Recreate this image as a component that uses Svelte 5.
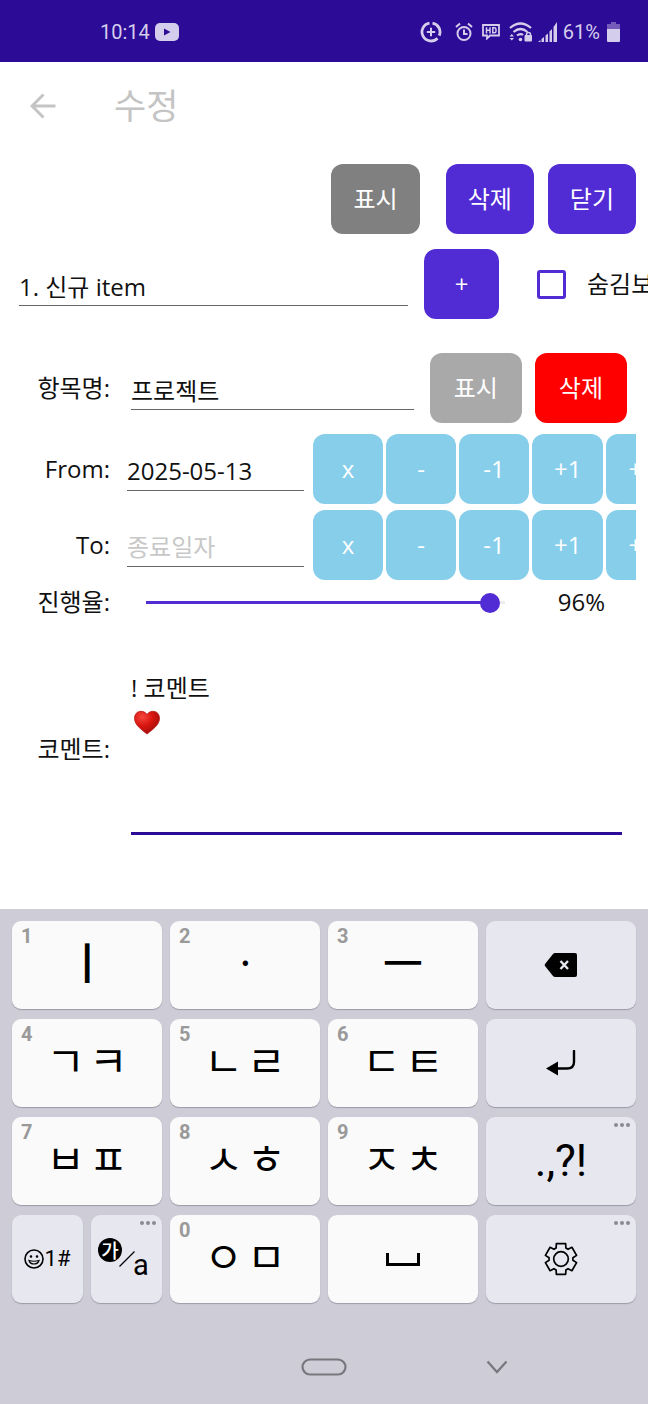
<script>
  let title = $state('1. 신규 item');
  let name = $state('프로젝트');
  let from = $state('2025-05-13');
  let to = $state('');
  let progress = $state(96);
  let comment = $state('! 코멘트\n');
  let showHidden = $state(false);

  const steps = ['x', '-', '-1', '+1', '+7'];
  const rows = [
    [
      { n: '1', t: 'ㅣ', kind: 'vowel' },
      { n: '2', t: 'ㆍ', kind: 'dot' },
      { n: '3', t: 'ㅡ', kind: 'vowel' },
      { icon: 'back', label: '지우기' }
    ],
    [{ n: '4', t: 'ㄱㅋ' }, { n: '5', t: 'ㄴㄹ' }, { n: '6', t: 'ㄷㅌ' }, { icon: 'enter', label: '줄바꿈' }],
    [{ n: '7', t: 'ㅂㅍ' }, { n: '8', t: 'ㅅㅎ' }, { n: '9', t: 'ㅈㅊ' }, { icon: 'punct', label: '문장 부호', more: true }],
    [{ icon: 'split' }, { n: '0', t: 'ㅇㅁ' }, { icon: 'space', label: '스페이스', light: true }, { icon: 'gear', label: '설정', more: true }]
  ];

  // Outline of the six-toothed gear, centred on 0,0
  const gear =
    'M' +
    Array.from({ length: 6 }, (_, i) =>
      [[-24, 12], [-17, 16], [17, 16], [24, 12]]
        .map(([d, r]) => {
          const a = ((i * 60 + d - 90) * Math.PI) / 180;
          return `${(r * Math.cos(a)).toFixed(2)} ${(r * Math.sin(a)).toFixed(2)}`;
        })
        .join('L')
    ).join('L') +
    'Z';
</script>

{#snippet dots()}
  <svg class="more" width="18" height="6" viewBox="0 0 18 6" aria-hidden="true">
    <circle cx="3" cy="3" r="2" /><circle cx="9" cy="3" r="2" /><circle cx="15" cy="3" r="2" />
  </svg>
{/snippet}

{#snippet dateRow(id, label, hint, get, set)}
  <div class="row date">
    <label class="name" for={id}>{label}</label>
    <input {id} class="line" type="text" placeholder={hint} value={get()} oninput={(e) => set(e.currentTarget.value)} />
    <div class="steps">
      {#each steps as s}<button class="btn sky">{s}</button>{/each}
    </div>
  </div>
{/snippet}

<div class="screen">
  <header class="status">
    <div class="side">
      <span>10:14</span>
      <svg width="24" height="18" viewBox="0 0 24 18"><rect width="24" height="18" rx="5" fill="#d5cdec" /><path d="M9 5.500L15.500 9L9 12.500Z" fill="#2c0b96" /></svg>
    </div>
    <div class="side icons">
      <svg class="saver" width="22" height="22" viewBox="0 0 22 22" fill="none" stroke="#d5cdec">
        <path d="M9.500 2.100A9 9 0 1 0 17.500 17.200M19.200 14.700A9 9 0 0 0 12.500 2.100" stroke-width="2.800" />
        <path d="M11 6.800V15.200M6.800 11H15.200" stroke-width="2" />
      </svg>
      <svg class="alarm" width="18" height="20" viewBox="0 0 18 20" fill="none" stroke="#d5cdec" stroke-width="2">
        <circle cx="9" cy="11.500" r="6.500" /><path d="M9 7.500V12H12.500M1 5L5 1.500M17 5L13 1.500" />
      </svg>
      <svg class="hd" width="18" height="16" viewBox="0 0 18 16" fill="none" stroke="#d5cdec">
        <path d="M1 1H17V11.500H8L5 14.500V11.500H1Z" stroke-width="1.800" />
        <path d="M4.500 3.200V9.500M8 3.200V9.500M4.500 6.300H8M10.800 3.800V8.800H12.300Q14 8.800 14 7.200V5.400Q14 3.800 12.300 3.800Z" stroke-width="1.500" />
      </svg>
      <svg class="wifi" width="24" height="20" viewBox="0 0 24 20" fill="none" stroke="#d5cdec" stroke-width="2.200">
        <path d="M1 6Q11.500 -3 22 6M4.500 10Q11.500 4 18.500 10M8 13.500Q11.500 10.800 14 13" />
        <path d="M17.500 14V12.500A2 2 0 0 1 21.500 12.500V14" stroke-width="1.500" />
        <g fill="#d5cdec" stroke="none"><rect x="15.500" y="13" width="7.500" height="6.500" rx="1" /><circle cx="11.500" cy="17.500" r="1.800" /><path d="M.5 14.500L2.800 12L5 14.500ZM.5 16L2.800 18.500L5 16Z" /></g>
      </svg>
      <svg class="bars" width="20" height="20" viewBox="0 0 20 20" fill="#d5cdec">
        <path d="M0 20L2.500 18V20ZM3.500 17L6 15V20H3.500ZM7.500 13.500L10 11.500V20H7.500ZM11.500 9.500L14 7V20H11.500ZM15.500 5L19 0V20H15.500Z" />
      </svg>
      <span>61%</span>
      <svg class="battery" width="13" height="20" viewBox="0 0 13 20"><path d="M4 0H9V2H13V7H0V2H4Z" fill="#755bb9" /><path d="M0 7H13V19Q13 20 12 20H1Q0 20 0 19Z" fill="#d5cdec" /></svg>
    </div>
  </header>

  <nav class="appbar">
    <button class="plain" aria-label="뒤로">
      <svg width="26" height="26" viewBox="0 0 26 26" fill="none" stroke="#c4c4c4" stroke-width="3"><path d="M25.500 13H3M13.500 1.500L2 13L13.500 24.500" /></svg>
    </button>
    <h1>수정</h1>
  </nav>

  <main>
    <div class="row actions">
      <button class="btn gray">표시</button>
      <button class="btn">삭제</button>
      <button class="btn">닫기</button>
    </div>

    <div class="row item">
      <input class="line" type="text" aria-label="item" bind:value={title} />
      <button class="btn">+</button>
      <label class="check"><input type="checkbox" bind:checked={showHidden} /><span>숨김보기</span></label>
    </div>

    <div class="row entry">
      <label class="name" for="name">항목명:</label>
      <input id="name" class="line" type="text" bind:value={name} />
      <button class="btn silver">표시</button>
      <button class="btn red">삭제</button>
    </div>

    {@render dateRow('from', 'From:', '시작일자', () => from, (v) => (from = v))}
    {@render dateRow('to', 'To:', '종료일자', () => to, (v) => (to = v))}

    <div class="row progress">
      <label class="name" for="progress">진행율:</label>
      <input id="progress" type="range" min="0" max="100" bind:value={progress} style="--p:{progress / 100}" />
      <output for="progress">{progress}%</output>
    </div>

    <div class="row comment">
      <label class="name" for="comment">코멘트:</label>
      <div class="box">
        <textarea id="comment" bind:value={comment}></textarea>
        <svg class="heart" width="28" height="26" viewBox="0 0 28 26" aria-hidden="true">
          <defs><radialGradient id="h" cx=".32" cy=".25" r=".8"><stop offset="0" stop-color="#f4473f" /><stop offset=".5" stop-color="#d9150f" /><stop offset="1" stop-color="#9c0d0a" /></radialGradient></defs>
          <path d="M14 4.500C17-.5 26.500 0 26.500 8.500C26.500 15 19 20 14 24C9 20 1.500 15 1.500 8.500C1.500 0 11-.5 14 4.500Z" fill="url(#h)" stroke="#b51a15" stroke-width=".8" />
        </svg>
      </div>
    </div>
  </main>

  <section class="keyboard">
    {#each rows as row}
      {#each row as k}
        {#if k.icon === 'split'}
          <div class="pair">
            <button class="key fn symbols">
              <svg width="22" height="22" viewBox="0 0 22 22" fill="none" stroke="#000" stroke-width="1.600"><circle cx="11" cy="11" r="9" /><path d="M6 12.500Q7 16 11 16T16 12.500Q11 14 6 12.500Z" stroke-width="1.200" /><circle cx="8" cy="8.500" r=".7" fill="#000" stroke-width="1.200" /><circle cx="14" cy="8.500" r=".7" fill="#000" stroke-width="1.200" /></svg><span>1#</span>
            </button>
            <button class="key fn lang">
              {@render dots()}
              <span class="ko">가</span>
              <svg class="slash" width="16" height="16" viewBox="0 0 16 16" stroke="#000" stroke-width="1.300"><path d="M.5 15.500L15.500 .5" /></svg>
              <span class="en">a</span>
            </button>
          </div>
        {:else if k.t}
          <button class="key jamo {k.kind}">
            <span class="hint">{k.n}</span>
            {#each k.t as c}<span>{c}</span>{/each}
          </button>
        {:else}
          <button class="key" class:fn={!k.light} aria-label={k.label}>
            {#if k.more}{@render dots()}{/if}
            {#if k.icon === 'back'}
              <svg width="34" height="24" viewBox="0 0 34 24"><path d="M11 0H31Q33 0 33 2V22Q33 24 31 24H11Q10 24 9 23L1 13Q.2 12 1 11L9 1Q10 0 11 0Z" /><path d="M16.500 8L24 16M24 8L16.500 16" stroke="#e7e7f0" stroke-width="2.400" /></svg>
            {:else if k.icon === 'enter'}
              <svg width="30" height="26" viewBox="0 0 30 26"><path d="M28 1V12Q28 18.500 21 18.500H10" fill="none" stroke="#000" stroke-width="2.400" stroke-linecap="round" /><path d="M0 18.500L12 11.500V25.500Z" /></svg>
            {:else if k.icon === 'punct'}
              <span class="punct">.,?!</span>
            {:else if k.icon === 'space'}
              <svg width="34" height="13" viewBox="0 0 34 13" fill="none" stroke="#000" stroke-width="3"><path d="M1.500 0V11.500H32.500V0" /></svg>
            {:else}
              <svg width="34" height="34" viewBox="-17 -17 34 34" fill="none" stroke="#000" stroke-width="1.700" stroke-linejoin="round"><path d={gear} /><circle r="7.300" /></svg>
            {/if}
          </button>
        {/if}
      {/each}
    {/each}
  </section>

  <footer>
    <button class="plain" aria-label="홈"><svg width="46" height="18" viewBox="0 0 46 18" fill="none" stroke="#77777e" stroke-width="2.200"><rect x="1.500" y="1.500" width="43" height="15" rx="7.500" /></svg></button>
    <button class="plain" aria-label="키보드 숨기기"><svg width="22" height="14" viewBox="0 0 22 14" fill="none" stroke="#77777e" stroke-width="2.200"><path d="M1.500 1.500L11 12L20.500 1.500" /></svg></button>
  </footer>
</div>

<style>
  :global(body) {
    margin: 0;
    background: #cdccd7;
  }
  .screen {
    background: #fff;
    color: #111;
    font: 24px/34px 'Open Sans', 'Noto Sans CJK KR', sans-serif;
    overflow: hidden;
  }
  .screen * {
    box-sizing: border-box;
  }
  button,
  input,
  textarea {
    font: inherit;
    color: inherit;
    margin: 0;
    padding: 0;
    border: 0;
    background: none;
    outline: 0;
  }
  svg {
    display: block;
    flex: none;
  }
  .status {
    height: 62px;
    padding: 1px 28px 0 100px;
    display: flex;
    align-items: center;
    justify-content: space-between;
    background: #2c0b96;
    color: #d5cdec;
    font: 20px/24px Roboto, sans-serif;
  }
  .side {
    display: flex;
    align-items: center;
    gap: 5px;
  }
  .saver {
    margin-right: 8px;
  }
  .alarm,
  .hd {
    margin-right: 4px;
  }
  .battery {
    margin-left: 2px;
  }
  .appbar {
    height: 88px;
    padding-left: 30px;
    display: flex;
    align-items: center;
    gap: 58px;
  }
  .plain {
    display: flex;
  }
  h1 {
    margin: 0;
    color: #c4c4c4;
    font-size: 35px;
    line-height: 48px;
    font-weight: 400;
  }
  main {
    padding-top: 14px;
    display: flex;
    flex-direction: column;
  }
  .row {
    display: flex;
    align-items: center;
  }
  .btn {
    flex: none;
    min-width: 70px;
    height: 70px;
    padding: 0 22px;
    border-radius: 12px;
    background: #512bd4;
    color: #fff;
    white-space: nowrap;
  }
  .gray {
    background: #808080;
  }
  .silver {
    background: #a9a9a9;
  }
  .red {
    background: #f00;
  }
  .sky {
    background: #87ceeb;
  }
  .line {
    min-width: 0;
    height: 44px;
    padding: 4px 0 1px;
    border-bottom: 1px solid #666;
  }
  .line::placeholder {
    color: #c8c8c8;
    opacity: 1;
  }
  .name {
    flex: none;
    width: 110px;
    text-align: right;
  }
  .actions {
    justify-content: flex-end;
    gap: 14px;
    padding-right: 12px;
  }
  .actions .gray {
    margin-right: 12px;
  }
  .item {
    display: grid;
    grid-template-columns: 1fr 75px 133px;
    gap: 16px;
    margin-top: 15px;
    padding-left: 19px;
  }
  .check {
    display: flex;
    align-items: center;
    gap: 21px;
    padding-left: 22px;
    overflow: hidden;
    white-space: nowrap;
  }
  .check input {
    appearance: none;
    flex: none;
    width: 29px;
    height: 29px;
    border: 3px solid #512bd4;
    border-radius: 3px;
  }
  .check input:checked {
    background: #512bd4;
  }
  .entry {
    margin-top: 34px;
    padding-right: 21px;
  }
  .entry .line {
    flex: 1;
    margin: 0 16px 0 21px;
  }
  .entry .btn {
    padding: 0 24px;
  }
  .entry .red {
    margin-left: 13px;
  }
  .date {
    margin-top: 11px;
    padding-right: 12px;
  }
  .date + .date {
    margin-top: 6px;
  }
  .date .line {
    flex: none;
    width: 177px;
    margin: 0 9px 0 17px;
  }
  .steps {
    flex: 1;
    min-width: 0;
    display: flex;
    gap: 3px;
    overflow: hidden;
  }
  .progress {
    margin-top: 5px;
    padding-right: 43px;
  }
  .progress input {
    appearance: none;
    flex: 1;
    min-width: 0;
    height: 20px;
    margin: 0 43px 0 26px;
  }
  .progress input::-webkit-slider-runnable-track {
    height: 3px;
    background: linear-gradient(
      to right,
      transparent 10px,
      #512bd4 10px calc(10px + (100% - 20px) * var(--p)),
      #ececf0 0 calc(100% - 10px),
      transparent 0
    );
  }
  .progress input::-webkit-slider-thumb {
    appearance: none;
    width: 20px;
    height: 20px;
    margin-top: -8px;
    border-radius: 50%;
    background: #512bd4;
  }
  .comment {
    margin-top: 44px;
    padding: 0 26px 74px 0;
  }
  .box {
    position: relative;
    flex: 1;
    margin-left: 21px;
  }
  textarea {
    display: block;
    width: 100%;
    height: 172px;
    padding-top: 8px;
    resize: none;
    border-bottom: 3px solid #2c0b96;
  }
  .heart {
    position: absolute;
    left: 2px;
    top: 47px;
  }
  .keyboard {
    display: grid;
    grid-template-columns: repeat(4, minmax(0, 1fr));
    gap: 10px 8px;
    padding: 12px 12px 50px;
    background: #cdccd7;
  }
  .key {
    position: relative;
    display: flex;
    align-items: center;
    justify-content: center;
    height: 88px;
    min-width: 0;
    border-radius: 9px;
    background: #fafafa;
    box-shadow: 0 1px 1px #9c9ca8;
    color: #000;
    font: 400 42px/48px 'Noto Sans CJK KR', sans-serif;
  }
  .jamo {
    gap: 4px;
    padding-bottom: 8px;
  }
  .vowel {
    font-size: 44px;
    font-weight: 500;
  }
  .fn {
    background: #e7e7f0;
  }
  .hint {
    position: absolute;
    left: 9px;
    top: 3px;
    color: #999;
    font: 700 20px/24px Roboto, sans-serif;
  }
  .more {
    position: absolute;
    right: 5px;
    top: 5px;
    fill: #8a8a92;
  }
  .pair {
    display: grid;
    grid-template-columns: 1fr 1fr;
    gap: 8px;
  }
  .symbols {
    padding-right: 2px;
    font: 22px/26px Roboto, sans-serif;
  }
  .lang {
    padding-right: 6px;
  }
  .lang .ko {
    width: 24px;
    height: 24px;
    margin-bottom: 18px;
    border-radius: 50%;
    background: #000;
    color: #fff;
    font-size: 19px;
    font-weight: 500;
    line-height: 23px;
  }
  .lang .slash {
    margin: 0 -2px 0 -3px;
  }
  .lang .en {
    margin-top: 12px;
    font: 29px/32px Roboto, sans-serif;
  }
  .punct {
    font: 44px/52px Roboto, sans-serif;
  }
  footer {
    display: flex;
    justify-content: center;
    gap: 139px;
    padding: 5px 0 29px 161px;
    background: #cdccd7;
  }
  footer .plain {
    align-items: center;
  }
</style>
